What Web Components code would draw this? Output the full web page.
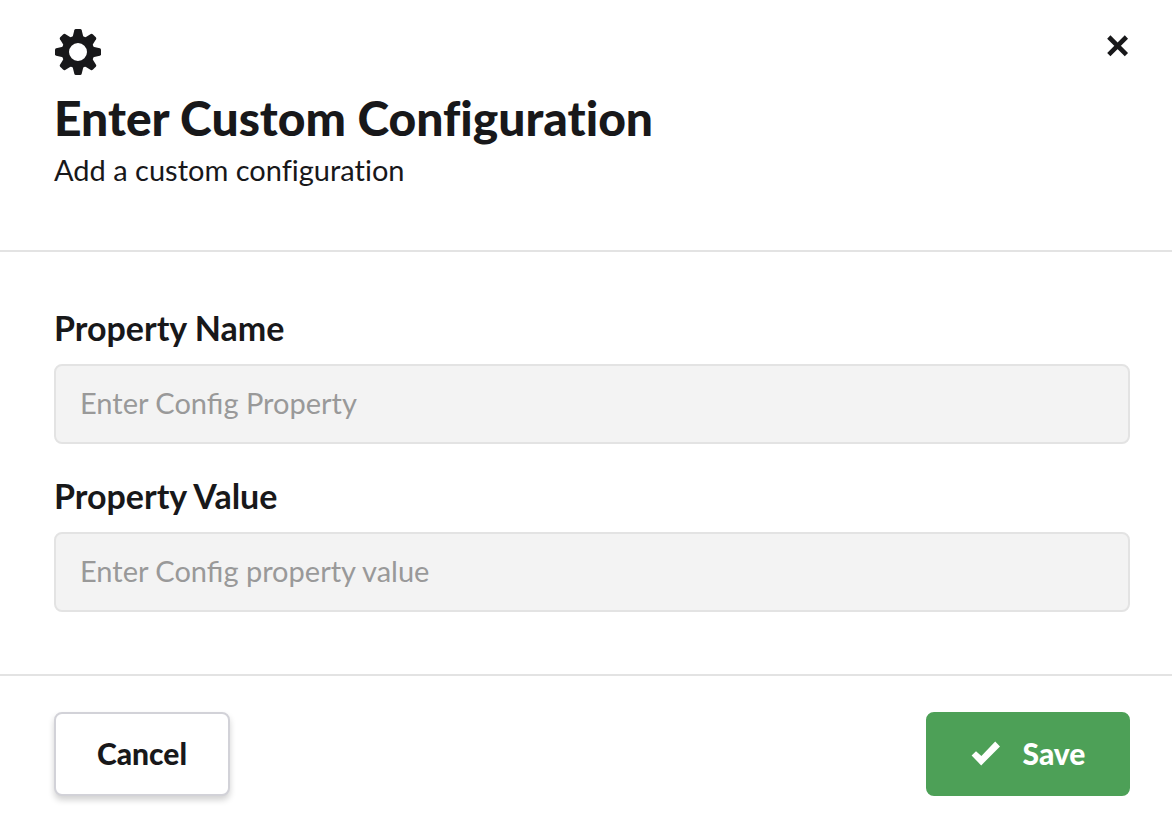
<!DOCTYPE html>
<html lang="en">
<head>
<meta charset="utf-8">
<meta name="viewport" content="width=device-width, initial-scale=1">
<title>Enter Custom Configuration</title>
<style>
  body {
    margin: 0;
    background: #fff;
    color: #18181a;
    font-family: Lato, "Open Sans", sans-serif;
    font-variant-ligatures: none;
    --gutter-start: 54px;
    --gutter-end: 42px;
    --line: #e3e3e3;
  }
</style>
</head>
<body>
<config-dialog>
  <dialog-header slot="header">
    <gear-icon slot="icon"></gear-icon>
    <span slot="title">Enter Custom Configuration</span>
    <span slot="subtitle">Add a custom configuration</span>
  </dialog-header>
  <text-field placeholder="Enter Config Property">Property Name</text-field>
  <text-field placeholder="Enter Config property value">Property Value</text-field>
  <action-button slot="actions">Cancel</action-button>
  <action-button slot="actions" variant="primary"><check-icon slot="icon"></check-icon>Save</action-button>
</config-dialog>

<script>
class BaseElement extends HTMLElement {
  constructor() {
    super();
    const template = document.createElement('template');
    template.innerHTML = this.constructor.markup;
    this.attachShadow({ mode: 'open' }).append(template.content.cloneNode(true));
  }
}

class GearIcon extends BaseElement {
  static markup = `
    <style>
      :host { display: block; width: 48px; height: 48px; }
      svg { display: block; width: 100%; height: 100%; }
    </style>
    <svg viewBox="-24 -24 48 48" fill="currentColor" aria-hidden="true">
      <defs>
        <path id="tooth" d="M-5.6-14 -3.7-21.8Q-3.4-23-2.2-23H2.2Q3.4-23 3.7-21.8L5.6-14Z"/>
      </defs>
      <path fill-rule="evenodd" d="M0-16.4A16.4 16.4 0 1 1 0 16.4A16.4 16.4 0 1 1 0-16.4ZM0-9A9 9 0 1 0 0 9A9 9 0 1 0 0-9Z"/>
      <use href="#tooth"/>
      <use href="#tooth" transform="rotate(45)"/>
      <use href="#tooth" transform="rotate(90)"/>
      <use href="#tooth" transform="rotate(135)"/>
      <use href="#tooth" transform="rotate(180)"/>
      <use href="#tooth" transform="rotate(225)"/>
      <use href="#tooth" transform="rotate(270)"/>
      <use href="#tooth" transform="rotate(315)"/>
    </svg>`;
}

class CheckIcon extends BaseElement {
  static markup = `
    <style>
      :host { display: block; width: 30px; height: 28px; }
      svg { display: block; width: 100%; height: 100%; }
    </style>
    <svg viewBox="0 0 30 28" fill="currentColor" aria-hidden="true">
      <path d="M.6 16.6 5 12.2 10.4 17 24.2 2.6 29 7.4 10.2 26.4Z"/>
    </svg>`;
}

class DialogHeader extends BaseElement {
  static markup = `
    <style>
      :host { display: block; }
      header {
        display: flex;
        justify-content: space-between;
        align-items: flex-start;
        padding: 28px var(--gutter-end) 62px var(--gutter-start);
        border-bottom: 2px solid var(--line);
      }
      h1 { margin: 14px 0 6px; font-size: 48px; line-height: 56px; font-weight: 900; }
      p { margin: 0; font-size: 29px; line-height: 36px; }
      button {
        display: flex;
        padding: 6px 0 6px 12px;
        border: 0;
        background: none;
        color: inherit;
        cursor: pointer;
      }
      button svg { width: 24px; height: 24px; }
    </style>
    <header>
      <div>
        <slot name="icon"></slot>
        <h1><slot name="title"></slot></h1>
        <p><slot name="subtitle"></slot></p>
      </div>
      <button type="button" aria-label="Close">
        <svg viewBox="0 0 24 24" fill="none" stroke="currentColor" stroke-width="4.6" aria-hidden="true">
          <path d="M2.8 3 20.4 20.6M20.4 3 2.8 20.6"/>
        </svg>
      </button>
    </header>`;
}

class TextField extends BaseElement {
  static markup = `
    <style>
      :host { display: flex; flex-direction: column; gap: 16px; }
      label { font-size: 34px; line-height: 40px; font-weight: 700; }
      input {
        box-sizing: border-box;
        width: 100%;
        height: 80px;
        padding: 0 24px 4px;
        border: 2px solid var(--line);
        border-radius: 8px;
        background: #f3f3f3;
        color: inherit;
        font: inherit;
        font-size: 29px;
        font-variant-ligatures: normal;
      }
      input::placeholder { color: #999; opacity: 1; }
    </style>
    <label for="field"><slot></slot></label>
    <input id="field" type="text">`;

  connectedCallback() {
    this.shadowRoot.querySelector('input').placeholder = this.getAttribute('placeholder') || '';
  }
}

class ActionButton extends BaseElement {
  static markup = `
    <style>
      :host { display: block; }
      button {
        display: flex;
        align-items: center;
        justify-content: center;
        gap: 22px;
        box-sizing: border-box;
        min-width: 176px;
        height: 84px;
        padding: 0 40px 2px;
        border: 2px solid #d2d2d8;
        border-radius: 8px;
        background: #fff;
        box-shadow: 0 4px 6px rgba(0, 0, 0, .18);
        color: inherit;
        font: inherit;
        font-size: 30px;
        line-height: 36px;
        font-weight: 900;
        cursor: pointer;
      }
      :host([variant="primary"]) button {
        min-width: 204px;
        border-color: #4da057;
        background: #4da057;
        box-shadow: none;
        color: #fff;
      }
    </style>
    <button type="button"><slot name="icon"></slot><span><slot></slot></span></button>`;
}

class ConfigDialog extends BaseElement {
  static markup = `
    <style>
      :host { display: block; }
      .fields {
        display: flex;
        flex-direction: column;
        gap: 32px;
        padding: 56px var(--gutter-end) 62px var(--gutter-start);
      }
      footer {
        display: flex;
        justify-content: space-between;
        padding: 36px var(--gutter-end) 22px var(--gutter-start);
        border-top: 2px solid var(--line);
      }
    </style>
    <section role="dialog" aria-label="Enter Custom Configuration">
      <slot name="header"></slot>
      <div class="fields"><slot></slot></div>
      <footer><slot name="actions"></slot></footer>
    </section>`;
}

customElements.define('gear-icon', GearIcon);
customElements.define('check-icon', CheckIcon);
customElements.define('dialog-header', DialogHeader);
customElements.define('text-field', TextField);
customElements.define('action-button', ActionButton);
customElements.define('config-dialog', ConfigDialog);
</script>
</body>
</html>
